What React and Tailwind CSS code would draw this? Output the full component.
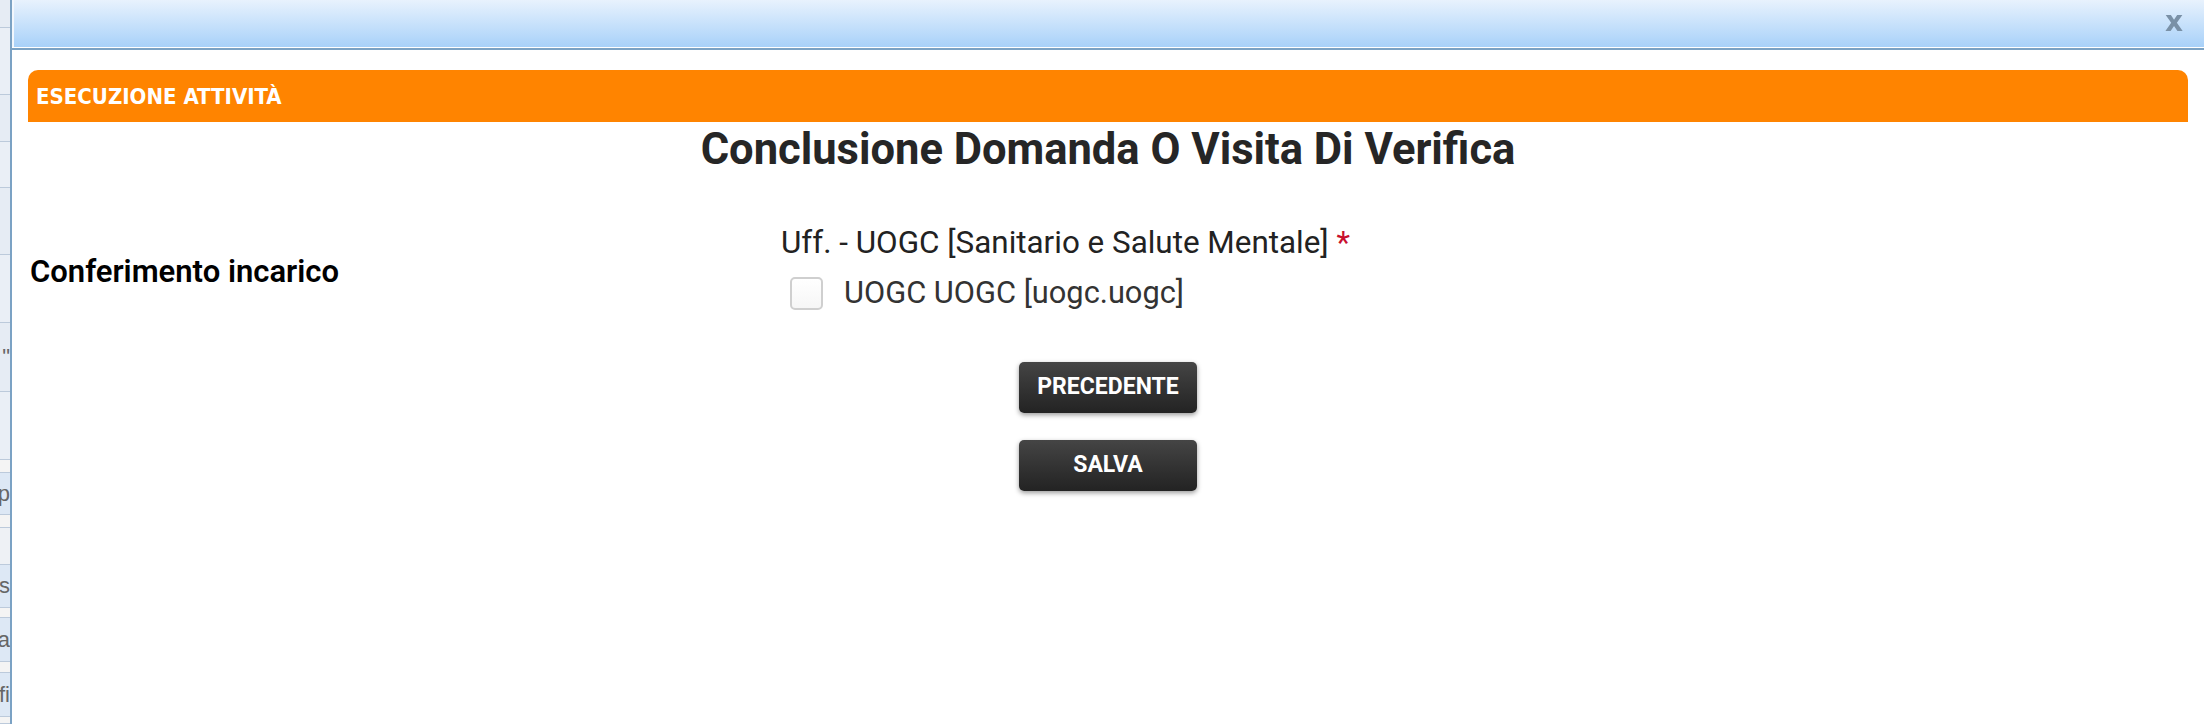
const STRIP_ROWS = [
  { h: 'h-[28px]', bg: 'bg-[#e6ecf4]' },
  { h: 'h-[67px]', bg: 'bg-[#eaeff6]' },
  { h: 'h-[47px]', bg: 'bg-[#e6ecf4]' },
  { h: 'h-[46px]', bg: 'bg-[#eaeff6]' },
  { h: 'h-[67px]', bg: 'bg-[#e6ecf4]' },
  { h: 'h-[68px]', bg: 'bg-[#eaeff6]' },
  { h: 'h-[69px]', bg: 'bg-[#e6ecf4]', text: '"' },
  { h: 'h-[68px]', bg: 'bg-[#eaeff6]' },
  { h: 'h-[13px]', bg: 'bg-[#f4f4f4]' },
  { h: 'h-[42px]', bg: 'bg-[#dde8f5]', text: 'p' },
  { h: 'h-[13px]', bg: 'bg-[#f4f4f4]' },
  { h: 'h-[37px]', bg: 'bg-[#eef1f5]' },
  { h: 'h-[43px]', bg: 'bg-[#dde8f5]', text: 's' },
  { h: 'h-[10px]', bg: 'bg-[#f4f4f4]' },
  { h: 'h-[44px]', bg: 'bg-[#dde8f5]', text: 'a' },
  { h: 'h-[11px]', bg: 'bg-[#f4f4f4]' },
  { h: 'h-[44px]', bg: 'bg-[#dde8f5]', text: 'fi' },
  { h: 'h-[7px]', bg: 'bg-[#f4f4f4]' },
]

// slice of the page that lies under the dialog
function BackgroundStrip() {
  return (
    <div className="flex w-[10px] shrink-0 flex-col overflow-hidden">
      {STRIP_ROWS.map((row, i) => (
        <div
          key={i}
          className={`${row.h} ${row.bg} flex shrink-0 items-center justify-end overflow-hidden border-b border-[#bccadb]`}
        >
          {row.text && (
            <span className="whitespace-nowrap text-[22px] leading-none text-[#666] [font-family:'Liberation_Sans',sans-serif]">
              {row.text}
            </span>
          )}
        </div>
      ))}
    </div>
  )
}

function DarkButton({ children }) {
  return (
    <button
      type="button"
      className="flex h-[51px] w-[178px] items-center justify-center rounded-[5px] bg-gradient-to-b from-[#454545] to-[#232323] text-[23px] font-bold text-white shadow-[0_2px_5px_rgba(0,0,0,0.4)]"
    >
      {children}
    </button>
  )
}

export default function App() {
  return (
    <div className="flex h-[724px] w-full overflow-hidden bg-white [font-family:Roboto,sans-serif]">
      <BackgroundStrip />

      <div className="flex min-w-0 flex-1 flex-col border-l-2 border-[#7ba2c4]">
        {/* dialog title bar */}
        <div className="border-b-2 border-[#7ba2c4] bg-white pb-px">
          <div className="flex h-[47px] items-center justify-end border-l-2 border-[#f2f7fd] bg-gradient-to-b from-[#e8f2fd] to-[#a8d1f9] pr-[21px]">
            <span className="pb-[4px] text-[28px] font-bold leading-none text-[#7a91a7] blur-[0.5px] [font-family:'DejaVu_Sans',sans-serif]">
              x
            </span>
          </div>
        </div>

        <div className="flex flex-col px-4 pt-5">
          <div className="flex h-[52px] items-center rounded-t-[10px] bg-[#ff8400] pl-2">
            <span className="text-[22px] font-bold text-white [font-family:'DejaVu_Sans_Condensed','DejaVu_Sans',sans-serif]">
              ESECUZIONE ATTIVITÀ
            </span>
          </div>

          <h1 className="mt-[6px] text-center text-[43.5px] font-bold leading-none text-[#262626]">
            Conclusione Domanda O Visita Di Verifica
          </h1>

          <div className="mt-[55px] flex items-center">
            <div className="mt-[6px] w-[753px] shrink-0 pl-[2px] text-[31px] font-semibold leading-none text-black">
              Conferimento incarico
            </div>
            <div className="flex flex-col gap-[19px]">
              <div className="text-[31.4px] leading-none text-[#222]">
                Uff. - UOGC [Sanitario e Salute Mentale] <span className="text-[#c8102e]">*</span>
              </div>
              <label className="flex items-center gap-[21px] pl-[9px]">
                <span className="h-[33px] w-[33px] rounded-[5px] border-2 border-[#cfcfcf] bg-gradient-to-b from-white to-[#f6f6f6]" />
                <span className="text-[30.8px] leading-none text-[#333]">UOGC UOGC [uogc.uogc]</span>
              </label>
            </div>
          </div>

          <div className="mt-[52px] flex flex-col items-center gap-[27px]">
            <DarkButton>PRECEDENTE</DarkButton>
            <DarkButton>SALVA</DarkButton>
          </div>
        </div>
      </div>
    </div>
  )
}
